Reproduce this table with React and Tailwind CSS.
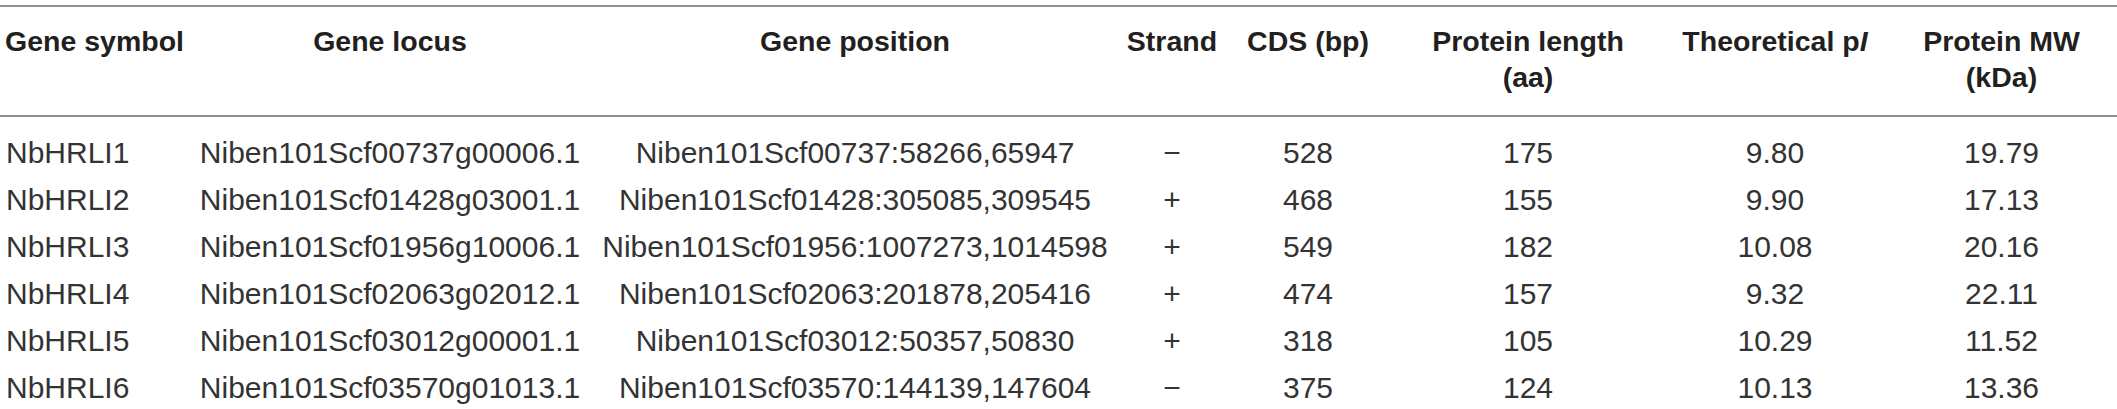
import React from 'react';

const rows = [
  ['NbHRLI1', 'Niben101Scf00737g00006.1', 'Niben101Scf00737:58266,65947', '−', '528', '175', '9.80', '19.79'],
  ['NbHRLI2', 'Niben101Scf01428g03001.1', 'Niben101Scf01428:305085,309545', '+', '468', '155', '9.90', '17.13'],
  ['NbHRLI3', 'Niben101Scf01956g10006.1', 'Niben101Scf01956:1007273,1014598', '+', '549', '182', '10.08', '20.16'],
  ['NbHRLI4', 'Niben101Scf02063g02012.1', 'Niben101Scf02063:201878,205416', '+', '474', '157', '9.32', '22.11'],
  ['NbHRLI5', 'Niben101Scf03012g00001.1', 'Niben101Scf03012:50357,50830', '+', '318', '105', '10.29', '11.52'],
  ['NbHRLI6', 'Niben101Scf03570g01013.1', 'Niben101Scf03570:144139,147604', '−', '375', '124', '10.13', '13.36'],
];

const grid = 'grid grid-cols-[190px_400px_530px_104px_168px_272px_222px_231px]';

export default function App() {
  return (
    <div className="w-[2117px] h-[409px] bg-white overflow-hidden font-['Liberation_Sans',Arial,sans-serif]">
      <div className="pt-[5px]">
        {/* cabecera */}
        <div className={`${grid} h-[112px] border-t-2 border-b-2 border-[#8f8f8f] pt-[16px] text-[28.5px] leading-[36px] font-bold text-[#231f20]`}>
          <div className="pl-[5px] whitespace-nowrap">Gene symbol</div>
          <div className="text-center">Gene locus</div>
          <div className="text-center">Gene position</div>
          <div className="text-center">Strand</div>
          <div className="text-center whitespace-nowrap">CDS (bp)</div>
          <div className="text-center">Protein length<br />(aa)</div>
          <div className="text-center whitespace-nowrap">Theoretical p<i>I</i></div>
          <div className="text-center">Protein MW<br />(kDa)</div>
        </div>

        {/* filas */}
        <div className="pt-[12px] text-[30px] text-[#333333]">
          {rows.map(r => (
            <div key={r[0]} className={`${grid} h-[47px] leading-[47px]`}>
              <div className="pl-[6px]">{r[0]}</div>
              {r.slice(1).map((c, i) => (
                <div key={i} className="text-center whitespace-nowrap">{c}</div>
              ))}
            </div>
          ))}
        </div>
      </div>
    </div>
  );
}
